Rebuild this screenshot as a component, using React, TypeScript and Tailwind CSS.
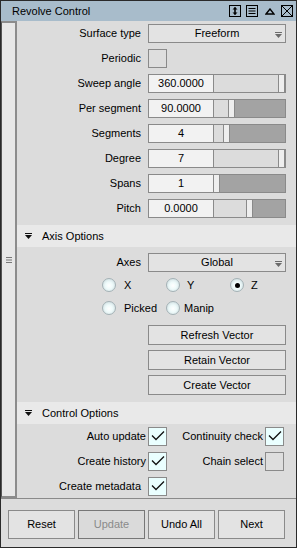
import type { ReactNode } from "react";

const sliders = [
  { label: "Sweep angle", value: "360.0000", handle: 278 },
  { label: "Per segment", value: "90.0000", handle: 228 },
  { label: "Segments", value: "4", handle: 223 },
  { label: "Degree", value: "7", handle: 278 },
  { label: "Spans", value: "1", handle: 213 },
  { label: "Pitch", value: "0.0000", handle: 246 },
];

function Row({ label, children }: { label: string; children: ReactNode }) {
  return (
    <div className="flex h-[19px] items-center">
      <div className="w-[124px] text-right">{label}</div>
      <div className="ml-[7px] flex h-full w-[138px]">{children}</div>
    </div>
  );
}

function Arrow({ color = "#6b6b6b" }: { color?: string }) {
  return (
    <svg width="7" height="6" viewBox="0 0 7 6">
      <rect x="0" y="0" width="7" height="1" fill={color} />
      <polygon points="0,2 7,2 3.5,6" fill={color} />
    </svg>
  );
}

function Dropdown({ value }: { value: string }) {
  return (
    <div className="relative flex h-full w-full items-center justify-center border border-[#8a8a8a] bg-[#e3e3e3]">
      {value}
      <span className="absolute right-[3px] top-[7px] flex">
        <Arrow />
      </span>
    </div>
  );
}

function Slider({ value, handle }: { value: string; handle: number }) {
  // handle is the screen x of the thumb's left border; track starts at x 214
  const light = handle - 214;
  return (
    <div className="flex h-full w-full border border-[#8a8a8a] bg-[#dcdcdc]">
      <div className="flex w-[65px] items-center justify-center border-r border-[#8a8a8a] bg-[#f2f2f2]">
        {value}
      </div>
      <div className="flex flex-1">
        <div className="shrink-0" style={{ width: Math.max(light, 0), marginRight: Math.min(light, 0) }} />
        <div className="w-[7px] shrink-0 border-x border-[#8a8a8a] bg-[#eeeeee]" />
        <div className="flex-1 bg-[#a3a3a3]" />
      </div>
    </div>
  );
}

function Check({ on }: { on: boolean }) {
  return (
    <div
      className={`flex h-[19px] w-[19px] shrink-0 items-center justify-center border border-[#8a8a8a] ${
        on ? "bg-[#eaffff]" : "bg-[#dedede]"
      }`}
    >
      {on && (
        <svg width="17" height="17" viewBox="0 0 17 17">
          <polyline points="3,7.5 7,11.5 15,3.5" fill="none" stroke="#111" strokeWidth="1.3" />
        </svg>
      )}
    </div>
  );
}

function Radio({ label, on, gap }: { label: string; on?: boolean; gap: string }) {
  return (
    <div className="flex items-center">
      <div className="flex h-[14px] w-[14px] items-center justify-center rounded-full border border-[#a4b2b6] bg-[radial-gradient(circle_at_50%_55%,#ffffff_0%,#eefafa_40%,#c4d4d8_100%)]">
        {on && <div className="h-[5px] w-[5px] rounded-full bg-black" />}
      </div>
      <span className={gap}>{label}</span>
    </div>
  );
}

function Section({ title }: { title: string }) {
  return (
    <div className="mt-[7px] flex h-[22px] items-center bg-[#e9e9e9] pl-[8px]">
      <Arrow color="#111" />
      <span className="ml-[10px]">{title}</span>
    </div>
  );
}

function Btn({ children, disabled }: { children: ReactNode; disabled?: boolean }) {
  return (
    <div
      className={`flex h-[29px] w-[67px] items-center justify-center border ${
        disabled ? "border-[#777] bg-[#dadada] text-[#8a8a8a]" : "border-[#8a8a8a] bg-[#e3e3e3]"
      }`}
    >
      {children}
    </div>
  );
}

function TitleIcons() {
  return (
    <div className="ml-auto mr-[3px] flex items-center">
      <svg width="12" height="12" viewBox="0 0 12 12">
        <rect x="0.5" y="0.5" width="11" height="11" fill="none" stroke="#000" />
        <path d="M6 2.5v7" stroke="#000" strokeWidth="1.6" />
        <polygon points="3.5,4.5 8.5,4.5 6,2" fill="#000" />
        <polygon points="3.5,7.5 8.5,7.5 6,10" fill="#000" />
      </svg>
      <svg width="12" height="12" viewBox="0 0 12 12" className="ml-[5px]">
        <rect x="0.5" y="0.5" width="11" height="11" fill="none" stroke="#000" />
        <path d="M2.5 3.5h7M2.5 6h7M2.5 8.5h7" stroke="#000" />
      </svg>
      <svg width="10" height="7" viewBox="0 0 10 7" className="ml-[7px]">
        <polygon points="1,6 5,1 9,6" fill="none" stroke="#000" strokeWidth="1.4" />
      </svg>
      <svg width="12" height="12" viewBox="0 0 12 12" className="ml-[6px]">
        <rect x="0.5" y="0.5" width="11" height="11" fill="none" stroke="#000" />
        <path d="M1 1l10 10M11 1L1 11" stroke="#000" />
      </svg>
    </div>
  );
}

export default function App() {
  return (
    <div className="flex h-[548px] w-[297px] flex-col border border-[#2a2a2a] bg-[#dcdcdc] font-['Liberation_Sans',Arial,sans-serif] text-[11px] leading-none text-black">
      <div className="flex h-[20px] shrink-0 items-center bg-[#a8bccb] pl-[11px] text-[11px]">
        <span>Revolve Control</span>
        <TitleIcons />
      </div>

      <div className="flex h-[477px] shrink-0">
        <div className="flex w-[16px] shrink-0 flex-col items-center justify-center border-2 border-l border-[#8c8c8c] border-l-[#555] bg-[#e7e7e7]">
          <svg width="6" height="6" viewBox="0 0 6 6">
            <path d="M0 0.5h6M0 3h6M0 5.5h6" stroke="#777" />
          </svg>
        </div>

        <div className="flex flex-1 flex-col pt-[3px]">
          <div className="flex flex-col gap-[6px]">
            <Row label="Surface type">
              <Dropdown value="Freeform" />
            </Row>
            <Row label="Periodic">
              <Check on={false} />
            </Row>
            {sliders.map((s) => (
              <Row key={s.label} label={s.label}>
                <Slider value={s.value} handle={s.handle} />
              </Row>
            ))}
          </div>

          <Section title="Axis Options" />
          <div className="mt-[6px]">
            <Row label="Axes">
              <Dropdown value="Global" />
            </Row>
          </div>
          <div className="ml-[85px] mt-[6px] grid grid-cols-[64px_64px_64px] gap-y-[9px]">
            <Radio label="X" gap="ml-[8px]" />
            <Radio label="Y" gap="ml-[7px]" />
            <Radio label="Z" on gap="ml-[7px]" />
            <Radio label="Picked" gap="ml-[8px]" />
            <Radio label="Manip" gap="ml-[4px]" />
          </div>
          <div className="ml-[131px] mt-[10px] flex w-[138px] flex-col gap-[5px]">
            {["Refresh Vector", "Retain Vector", "Create Vector"].map((b) => (
              <div
                key={b}
                className="flex h-[20px] items-center justify-center border border-[#8a8a8a] bg-[#e3e3e3]"
              >
                {b}
              </div>
            ))}
          </div>

          <Section title="Control Options" />
          <div className="mt-[3px] flex flex-col gap-[6px]">
            <div className="flex h-[19px]">
              <div className="flex w-[150px] items-center justify-end gap-[2px]">
                Auto update
                <Check on />
              </div>
              <div className="flex w-[117px] items-center justify-end gap-[2px]">
                Continuity check
                <Check on />
              </div>
            </div>
            <div className="flex h-[19px]">
              <div className="flex w-[150px] items-center justify-end gap-[2px]">
                Create history
                <Check on />
              </div>
              <div className="flex w-[117px] items-center justify-end gap-[2px]">
                Chain select
                <Check on={false} />
              </div>
            </div>
            <Row label="Create metadata">
              <Check on />
            </Row>
          </div>
        </div>
      </div>

      <div className="flex flex-1 gap-[3px] border-t border-[#8a8a8a] pl-[7px] pt-[11px]">
        <Btn>Reset</Btn>
        <Btn disabled>Update</Btn>
        <Btn>Undo All</Btn>
        <Btn>Next</Btn>
      </div>
    </div>
  );
}
